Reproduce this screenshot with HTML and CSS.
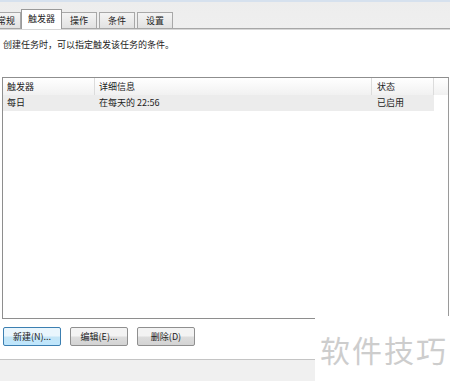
FILE: index.html
```html
<!DOCTYPE html>
<html lang="zh">
<head>
    <meta charset="UTF-8">
    <title>触发器</title>
    <link rel="stylesheet" href="styles.css">
</head>
<body>

<div class="window">
    <div class="top-strip"></div>
    <div class="tabbar">
        <div class="tab first">常规</div>
        <div class="tab active">触发器</div>
        <div class="tab">操作</div>
        <div class="tab">条件</div>
        <div class="tab">设置</div>
    </div>

    <div class="page">
        <p class="hint">创建任务时，可以指定触发该任务的条件。</p>

        <div class="list">
            <div class="list-head">
                <div class="col c1">触发器</div>
                <div class="col c2">详细信息</div>
                <div class="col c3">状态</div>
                <div class="col c4"></div>
            </div>
            <div class="list-row">
                <div class="col c1">每日</div>
                <div class="col c2">在每天的 22:56</div>
                <div class="col c3">已启用</div>
            </div>
        </div>

        <div class="buttons">
            <button class="btn focus">新建(N)...</button>
            <button class="btn">编辑(E)...</button>
            <button class="btn">删除(D)</button>
        </div>
    </div>

    <div class="footer"></div>
</div>

<div class="watermark">软件技巧</div>

</body>
</html>
```

FILE: styles.css
```css
body { margin: 0; background: #fff; font-family: "Noto Sans CJK SC", "Microsoft YaHei", sans-serif; font-size: 9px; color: #222; overflow: hidden; }
.window { width: 450px; height: 381px; display: flex; flex-direction: column; }
.top-strip { height: 2px; background: #d6e1ee; }
.tabbar { height: 26px; background: linear-gradient(#ededed, #efefef); border-bottom: 1px solid #a7a7a7; display: flex; align-items: flex-end; box-shadow: 0 1px 0 #d8d8d8; }
.tab { height: 15px; line-height: 15px; padding: 0 8px; margin-right: 2px; border: 1px solid #a8a8a8; border-bottom: none; background: linear-gradient(#f4f4f4, #e2e2e2); color: #222; }
.tab.first { margin-left: -12px; padding: 0 5px 0 8px; margin-right: 1px; }
.tab.active { height: 19px; line-height: 17px; background: #fff; padding: 0 6px; margin: 0 -1px -1px -1px; border-color: #9a9a9a; position: relative; z-index: 1; }
.page { flex: 1; padding: 0 2px; display: flex; flex-direction: column; }
.hint { margin: 10px 0 0 1px; line-height: 12px; }
.list { margin-top: 26px; height: 242px; border: 1px solid #8e8e8e; border-right-color: #9a9a9a; box-sizing: border-box; width: 447px; }
.list-head { display: flex; height: 17px; background: linear-gradient(#fff, #f1f1f1); }
.list-head .col { border-right: 1px solid #dcdcdc; line-height: 17px; }
.list-row { display: flex; height: 16px; background: #ececec; width: 431px; line-height: 16px; }
.col { box-sizing: border-box; padding-left: 4px; }
.c1 { width: 92px; }
.c2 { width: 277px; padding-left: 4px; }
.c3 { width: 62px; padding-left: 5px; }
.c4 { flex: 1; border-right: none !important; }
.buttons { display: flex; gap: 9px; margin-top: 8px; padding-left: 1px; }
.btn { width: 58px; height: 19px; padding: 0; font: inherit; color: #222; border: 1px solid #8f8f8f; border-radius: 2px; background: linear-gradient(#f3f3f3 45%, #dcdcdc 55%, #d3d3d3); }
.btn.focus { border-color: #3c7fb1; background: linear-gradient(#eaf6fd 45%, #c4e5f6 55%, #bee6fd); }
.footer { height: 21px; border-top: 1px solid #c4c4c4; background: #f0f0f0; }
.watermark { position: absolute; left: 315px; top: 316px; width: 135px; height: 65px; background: #fff; color: #cdcdcd; font-size: 30px; letter-spacing: 2px; line-height: 66px; padding-left: 5px; box-sizing: border-box; font-family: "Noto Sans CJK SC", sans-serif; }
```
